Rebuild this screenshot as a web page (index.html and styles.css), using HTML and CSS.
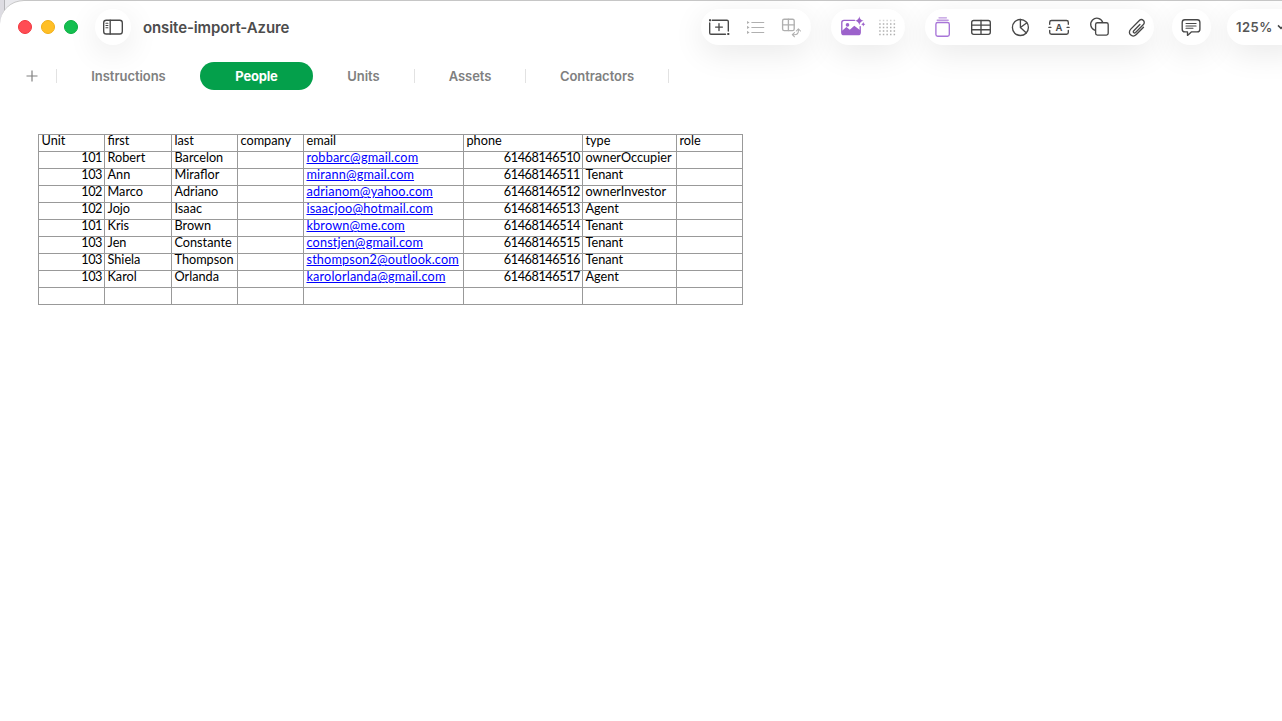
FILE: index.html
```html
<!DOCTYPE html>
<html lang="en">

<head>
  <meta charset="UTF-8">
  <meta name="viewport" content="width=device-width, initial-scale=1.0">
  <title>onsite-import-Azure</title>
  <link rel="stylesheet" href="styles.css">
</head>

<body>
  <div class="window">
    <header class="toolbar">
      <div class="lights">
        <span class="light red"></span>
        <span class="light yellow"></span>
        <span class="light green"></span>
      </div>
      <button class="pill sidebar-btn" aria-label="Sidebar">
        <svg class="icon" viewBox="0 0 24 24">
          <rect x="2.7" y="5.2" width="18.6" height="13.8" rx="2.6" />
          <path d="M9.2 5.2V19" />
          <path class="thin" d="M4.9 8.2h2M4.9 10.5h2M4.9 12.8h2" />
        </svg>
      </button>
      <h1 class="title">onsite-import-Azure</h1>

      <div class="tools">
        <div class="pill group-insert">
          <svg class="icon" viewBox="0 0 24 24">
            <path d="M5.2 5.2H20q1.3 0 1.3 1.3V16M18.5 19.2H4q-1.3 0-1.3-1.3V8M12 8.7v6.8M8.6 12.1h6.8" />
            <path class="fill" d="M2 4.2h2v2H2zM20.3 18h2v2h-2z" />
          </svg>
          <svg class="icon muted" viewBox="0 0 24 24">
            <path class="thin" d="M8.8 7.5h12M8.8 12.4h12M8.8 17.4h12" />
            <path class="fill" d="M4 5.9l2.6 1.6L4 9.1zM4 10.8l2.6 1.6L4 14zM4 15.8l2.6 1.6L4 19z" />
          </svg>
          <svg class="icon muted" viewBox="0 0 24 24">
            <rect x="3.6" y="4.2" width="11.6" height="11.4" rx="1.6" />
            <path d="M9.4 4.2v11.4M3.6 9.9h11.6" />
            <path class="thin" d="M13.6 19.7h1.8q4 0 4-4v-1.4M15.5 17.6l-2.2 2.1 2.2 2.1M17.3 16l2.1-2.2 2.1 2.2" />
          </svg>
        </div>

        <div class="pill group-image">
          <svg class="icon purple" viewBox="0 0 24 24">
            <path d="M13.5 5.3H3q-2.2 0-2.2 2.2v9.9q0 2.2 2.2 2.2h14q2.2 0 2.2-2.2v-5.8" />
            <path class="fill" d="M.8 16l4.6-4 3.4 2.8 4.5-4 5.9 4.4v2.2q0 2.2-2.2 2.2H3q-2.2 0-2.2-2.2z" />
            <circle class="fill" cx="6.5" cy="9.9" r="1.8" />
            <path class="fill" d="M18.3 1.3q.5 4 4.3 4.4-3.8.5-4.3 4.5-.5-4-4.3-4.5 3.8-.4 4.3-4.4zM22.3 7.1q.2 2 2 2.2-1.8.3-2 2.3-.3-2-2.1-2.3 1.8-.2 2.1-2.2z" />
          </svg>
          <svg class="icon muted" viewBox="0 0 24 24">
            <path class="dots-light" d="M4.2 5.6h16" />
            <path class="dots" d="M4.2 9.1h16M4.2 12.6h16M4.2 16.1h16M4.2 19.4h16" />
          </svg>
        </div>

        <div class="pill group-objects">
          <svg class="icon lilac" viewBox="0 0 24 24">
            <rect x="5.9" y="7.5" width="13.4" height="13.7" rx="1.8" />
            <path class="soft" d="M7.2 5.2h11M9 2.8h7.4" />
          </svg>
          <svg class="icon" viewBox="0 0 24 24">
            <rect x="2.7" y="5.5" width="18.6" height="13.8" rx="2" />
            <path d="M2.7 10.1h18.6M2.7 14.7h18.6M12 5.5v13.8" />
          </svg>
          <svg class="icon" viewBox="0 0 24 24">
            <circle cx="12.4" cy="12.5" r="8" />
            <path d="M12.4 4.5v8l6 5.4M12.4 12.5l6.5-4.8" />
          </svg>
          <svg class="icon" viewBox="0 0 24 24">
            <path d="M2.7 9.2V7.3q0-1.8 1.8-1.8h15q1.8 0 1.8 1.8v1.9M2.7 15.5v1.9q0 1.8 1.8 1.8h15q1.8 0 1.8-1.8v-1.9M1.9 12.4h2M20.1 12.4h2" />
            <text x="12" y="15.8" text-anchor="middle">A</text>
          </svg>
          <svg class="icon" viewBox="0 0 24 24">
            <path d="M8.7 15.2A6.2 6.2 0 1 1 16.7 7.2" />
            <rect x="9.6" y="7.7" width="12.6" height="12.4" rx="1.8" />
          </svg>
          <svg class="icon" viewBox="0 0 24 24">
            <path d="M14.9 9.5l-6.1 6.2c-1.4 1.4.4 3.1 1.8 1.8l7.6-7.7c3-3-1.1-7.1-4.1-4.1l-8.3 8.4c-4 4.1 1.5 9.4 5.5 5.4l7.2-7.3" />
          </svg>
        </div>

        <div class="pill group-comment">
          <svg class="icon" viewBox="0 0 24 24">
            <path d="M5.9 4.7h12.3q2.7 0 2.7 2.7v6.8q0 2.7-2.7 2.7h-5.9l-3.8 3.5v-3.5H5.9q-2.7 0-2.7-2.7V7.4q0-2.7 2.7-2.7z" />
            <path class="thin" d="M7 8.4h10.1M7 10.9h10.1M7 13.3h7" />
          </svg>
        </div>

        <div class="pill zoom">
          <span>125%</span>
          <svg class="chevron" viewBox="0 0 8 6">
            <path d="M1 1.4l3 3 3-3" />
          </svg>
        </div>
      </div>
    </header>

    <nav class="tabs">
      <button class="add" aria-label="Add sheet">
        <svg viewBox="0 0 12 12">
          <path d="M6 .5v11M.5 6h11" />
        </svg>
      </button>
      <a class="tab instructions">Instructions</a>
      <a class="tab active">People</a>
      <a class="tab units">Units</a>
      <a class="tab assets">Assets</a>
      <a class="tab contractors">Contractors</a>
    </nav>

    <main class="sheet">
      <table>
        <colgroup>
          <col class="w66">
          <col class="w67">
          <col class="w66">
          <col class="w66">
          <col class="w160">
          <col class="w119">
          <col class="w94">
          <col class="w66">
        </colgroup>
        <tbody>
          <tr><td>Unit</td><td>first</td><td>last</td><td>company</td><td>email</td><td>phone</td><td>type</td><td>role</td></tr>
          <tr><td class="num">101</td><td>Robert</td><td>Barcelon</td><td></td><td><a href="mailto:robbarc@gmail.com">robbarc@gmail.com</a></td><td class="num">61468146510</td><td>ownerOccupier</td><td></td></tr>
          <tr><td class="num">103</td><td>Ann</td><td>Miraflor</td><td></td><td><a href="mailto:mirann@gmail.com">mirann@gmail.com</a></td><td class="num">61468146511</td><td>Tenant</td><td></td></tr>
          <tr><td class="num">102</td><td>Marco</td><td>Adriano</td><td></td><td><a href="mailto:adrianom@yahoo.com">adrianom@yahoo.com</a></td><td class="num">61468146512</td><td>ownerInvestor</td><td></td></tr>
          <tr><td class="num">102</td><td>Jojo</td><td>Isaac</td><td></td><td><a href="mailto:isaacjoo@hotmail.com">isaacjoo@hotmail.com</a></td><td class="num">61468146513</td><td>Agent</td><td></td></tr>
          <tr><td class="num">101</td><td>Kris</td><td>Brown</td><td></td><td><a href="mailto:kbrown@me.com">kbrown@me.com</a></td><td class="num">61468146514</td><td>Tenant</td><td></td></tr>
          <tr><td class="num">103</td><td>Jen</td><td>Constante</td><td></td><td><a href="mailto:constjen@gmail.com">constjen@gmail.com</a></td><td class="num">61468146515</td><td>Tenant</td><td></td></tr>
          <tr><td class="num">103</td><td>Shiela</td><td>Thompson</td><td></td><td><a href="mailto:sthompson2@outlook.com">sthompson2@outlook.com</a></td><td class="num">61468146516</td><td>Tenant</td><td></td></tr>
          <tr><td class="num">103</td><td>Karol</td><td>Orlanda</td><td></td><td><a href="mailto:karolorlanda@gmail.com">karolorlanda@gmail.com</a></td><td class="num">61468146517</td><td>Agent</td><td></td></tr>
          <tr><td></td><td></td><td></td><td></td><td></td><td></td><td></td><td></td></tr>
        </tbody>
      </table>
    </main>
  </div>
</body>

</html>
```
FILE: styles.css
```css
* {
  padding: 0;
  margin: 0;
  box-sizing: border-box;
}

body {
  height: 100vh;
  overflow: hidden;
  font-family: Inter, sans-serif;
  background: linear-gradient(90deg, #dddce2 4px, #b4b4b8 4px, #b4b4b8 5px, #e9e9ed 5px, #e9e9ed 30px, #c6c6c6 30px, #cccccc 1012px, #999999 1013px, #999999 1050px, #b4b4b4 1070px);
}

.window {
  height: 100vh;
  overflow: hidden;
  background: #ffffff;
  border-top: 1px solid #c6c6c6;
  border-top-left-radius: 24px;
}

.toolbar {
  display: flex;
  align-items: center;
  height: 52px;
  padding-left: 18px;
}

.lights {
  display: flex;
  gap: 9px;
  margin-right: 17px;
}

.light {
  width: 14px;
  height: 14px;
  border-radius: 50%;
}

.red {
  background: #ff4c54;
  border: 1px solid #f0353d;
}

.yellow {
  background: #ffbf26;
  border: 1px solid #efae18;
}

.green {
  background: #14bf50;
  border: 1px solid #0cae42;
}

.pill {
  display: flex;
  align-items: center;
  flex-shrink: 0;
  height: 36px;
  border: none;
  border-radius: 18px;
  background: #ffffff;
  box-shadow: 0 8px 32px rgba(0, 0, 0, 0.09);
}

.sidebar-btn {
  width: 36px;
  padding-left: 6px;
}

.title {
  flex-shrink: 0;
  width: 558px;
  padding-left: 12px;
  color: #4c4c4c;
  font-size: 15px;
  font-weight: 600;
  letter-spacing: -0.1px;
  white-space: nowrap;
}

.tools {
  display: flex;
  flex-shrink: 0;
  margin-left: 12px;
}

.icon {
  flex-shrink: 0;
  width: 24px;
  height: 24px;
  overflow: visible;
  fill: none;
  stroke: #484848;
  stroke-width: 1.35;
  stroke-linecap: round;
  stroke-linejoin: round;
}

.icon text {
  fill: #484848;
  stroke: none;
  font-size: 9.5px;
  font-weight: 600;
}

.icon .thin {
  stroke-width: 1.05;
}

.icon .fill {
  fill: #484848;
  stroke: none;
}

.icon.muted {
  stroke: #b0b0b0;
}

.muted .fill {
  fill: #b0b0b0;
}

.icon.purple {
  stroke: #9c62cb;
}

.purple .fill {
  fill: #9c62cb;
}

.icon.lilac {
  stroke: #a875d8;
}

.lilac .soft {
  stroke: #bd96e0;
}

.dots,
.dots-light {
  stroke-width: 1.5;
  stroke-linecap: butt;
  stroke-dasharray: 1.5 2.1;
}

.dots-light {
  stroke: #d4d4d4;
}

.group-insert {
  width: 110px;
  padding-left: 6px;
  gap: 12px;
  margin-right: 20px;
}

.group-image {
  width: 74px;
  padding-left: 10px;
  gap: 10px;
  margin-right: 20px;
}

.group-objects {
  width: 229px;
  padding-left: 5px;
  gap: 15px;
  margin-right: 18px;
}

.group-comment {
  width: 39px;
  padding-left: 7px;
  margin-right: 16px;
}

.zoom {
  width: 80px;
  padding-left: 9px;
  gap: 4px;
  color: #555555;
  font-size: 13px;
  font-weight: 600;
  letter-spacing: 0.5px;
}

.chevron {
  width: 8px;
  height: 6px;
  fill: none;
  stroke: #484848;
  stroke-width: 1.5;
}

.tabs {
  display: flex;
  align-items: center;
  height: 46px;
  color: #808080;
  font-size: 13px;
  font-weight: 600;
  letter-spacing: -0.05px;
}

.add {
  display: flex;
  align-items: center;
  width: 57px;
  height: 14px;
  padding-left: 26px;
  border: none;
  border-right: 1px solid #e2e2e2;
  background: none;
}

.add svg {
  width: 12px;
  height: 12px;
  stroke: #808080;
  stroke-width: 1.2;
}

.tab {
  height: 14px;
  line-height: 15px;
  text-align: center;
  border-right: 1px solid #e2e2e2;
}

.instructions {
  width: 143px;
  border: none;
}

.active {
  width: 113px;
  height: 28px;
  line-height: 29px;
  border: none;
  border-radius: 14px;
  background: #04a04b;
  color: #ffffff;
  font-weight: 700;
  letter-spacing: -0.2px;
}

.units {
  width: 102px;
}

.assets {
  width: 111px;
}

.contractors {
  width: 143px;
}

.sheet {
  padding: 35px 0 0 38px;
}

table {
  width: 705px;
  table-layout: fixed;
  border-collapse: collapse;
  font-family: Lato, sans-serif;
  font-size: 12.7px;
}

.w66 {
  width: 66px;
}

.w67 {
  width: 67px;
}

.w94 {
  width: 94px;
}

.w119 {
  width: 119px;
}

.w160 {
  width: 160px;
}

td {
  height: 17px;
  padding: 0 2px 5px 2.5px;
  border: 1px solid #999999;
  color: #000000;
  line-height: 11px;
  white-space: nowrap;
}

.num {
  text-align: right;
  letter-spacing: -0.43px;
}

td a {
  color: #0000ff;
  letter-spacing: 0.16px;
}
```
